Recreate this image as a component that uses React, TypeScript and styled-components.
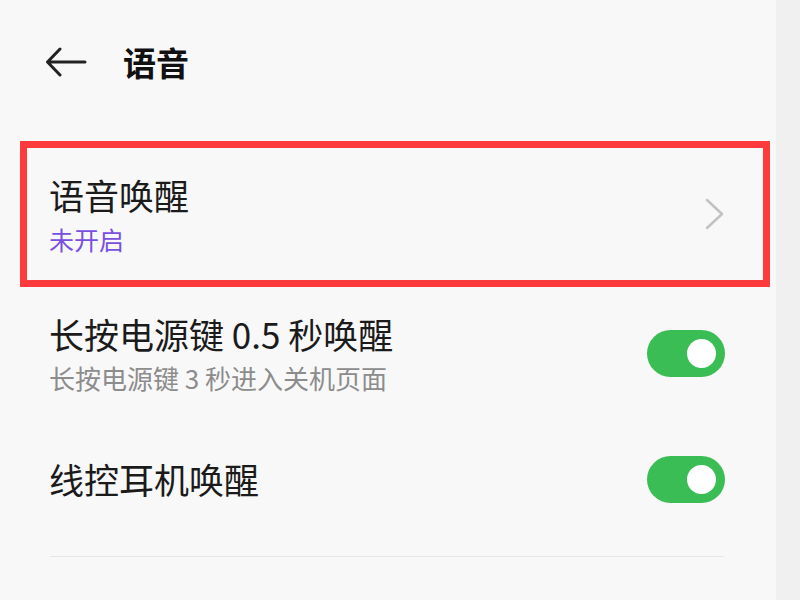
import React, { FC } from "react"
import styled, { createGlobalStyle } from "styled-components"

const GlobalStyle = createGlobalStyle`
  html, body {
    margin: 0;
    padding: 0;
    background: #f8f8f8;
  }
  body {
    font-family: "Noto Sans CJK SC", "Noto Sans", sans-serif;
    color: #1b1b1b;
  }
`

type RowProps = {
  title: string
  subtitle?: string
  on?: boolean
  height: number
}

const ToggleRow: FC<RowProps> = ({ title, subtitle, on, height }) => (
  <Row height={height}>
    <TextBlock>
      <Title>{title}</Title>
      {subtitle && <Subtitle>{subtitle}</Subtitle>}
    </TextBlock>
    <Switch on={!!on}>
      <Knob />
    </Switch>
  </Row>
)

const App: FC = () => {
  return (
    <>
      <GlobalStyle />
      <Screen>
        <Main>
          <Header>
            <svg width="42" height="30" viewBox="0 0 42 30">
              <path
                d="M40 15H3M15 2L2.5 15L15 28"
                fill="none"
                stroke="#222"
                strokeWidth="3"
                strokeLinecap="round"
                strokeLinejoin="round"
              />
            </svg>
            <HeaderTitle>语音</HeaderTitle>
          </Header>

          <Highlight>
            <TextBlock>
              <Title>语音唤醒</Title>
              <Status>未开启</Status>
            </TextBlock>
            <svg width="20" height="32" viewBox="0 0 20 32">
              <path
                d="M2 2L17 16L2 30"
                fill="none"
                stroke="#c2c2c2"
                strokeWidth="2.5"
                strokeLinecap="round"
                strokeLinejoin="round"
              />
            </svg>
          </Highlight>

          <ToggleRow
            title="长按电源键 0.5 秒唤醒"
            subtitle="长按电源键 3 秒进入关机页面"
            on
            height={132}
          />
          <ToggleRow title="线控耳机唤醒" on height={120} />
          <Divider />
        </Main>
        <Edge />
      </Screen>
    </>
  )
}

const Screen = styled.div`
  display: flex;
  width: 800px;
  height: 600px;
  overflow: hidden;
`

const Main = styled.div`
  width: 776px;
  display: flex;
  flex-direction: column;
`

const Edge = styled.div`
  flex: 1;
  background: #f0f0f0;
`

const Header = styled.div`
  height: 124px;
  display: flex;
  align-items: center;
  gap: 36px;
  padding-left: 45px;
  box-sizing: border-box;
`

const HeaderTitle = styled.h1`
  margin: 0;
  font-size: 33px;
  font-weight: 700;
  color: #111;
  line-height: 1;
`

const Highlight = styled.div`
  margin: 17px 6px 0 20px;
  height: 146px;
  box-sizing: border-box;
  border: 7px solid #ff3a3c;
  display: flex;
  align-items: center;
  justify-content: space-between;
  padding: 0 38px 0 22px;
`

const TextBlock = styled.div`
  display: flex;
  flex-direction: column;
  gap: 8px;
`

const Title = styled.div`
  font-size: 35px;
  line-height: 42px;
  font-weight: 400;
  color: #1b1b1b;
`

const Status = styled.div`
  font-size: 25px;
  line-height: 30px;
  color: #7a50df;
`

const Subtitle = styled.div`
  font-size: 26px;
  line-height: 30px;
  color: #8c8c8c;
`

const Row = styled.div<{ height: number }>`
  height: ${({ height }) => height}px;
  display: flex;
  align-items: center;
  justify-content: space-between;
  padding: 0 51px 0 49px;
`

const Switch = styled.div<{ on: boolean }>`
  position: relative;
  width: 78px;
  height: 47px;
  border-radius: 24px;
  background: ${({ on }) => (on ? "#3bbd55" : "#d0d0d0")};
  flex-shrink: 0;
`

const Knob = styled.div`
  position: absolute;
  top: 9px;
  right: 9px;
  width: 29px;
  height: 29px;
  border-radius: 50%;
  background: #fff;
`

const Divider = styled.div`
  margin: 17px 52px 0 50px;
  height: 1px;
  background: #e6e6e6;
`

export default App
